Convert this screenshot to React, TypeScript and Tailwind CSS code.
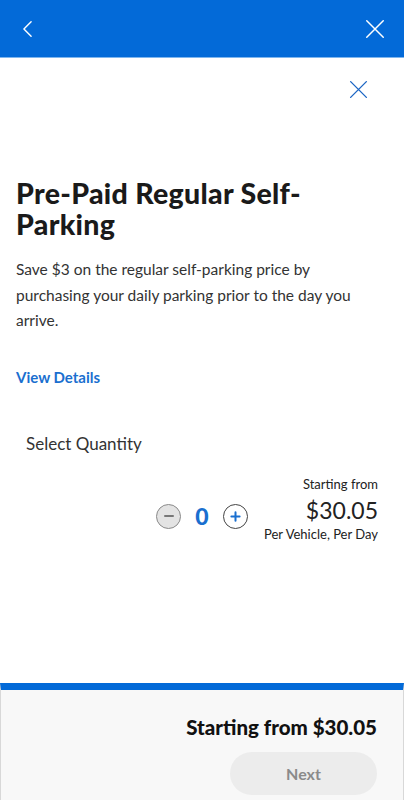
import React, { useState } from 'react';

const Cross = ({ className }: { className?: string }) => (
  <svg viewBox="0 0 24 24" className={className} fill="none" stroke="currentColor" strokeWidth={1.6} strokeLinecap="round">
    <path d="M3 3 L21 21 M21 3 L3 21" />
  </svg>
);

export default function App() {
  const [qty, setQty] = useState(0);

  return (
    <div className="h-[800px] w-full flex flex-col bg-white overflow-hidden" style={{ fontFamily: 'Lato, "Noto Sans", sans-serif' }}>
      {/* Top bar */}
      <div className="h-[58px] bg-[#036ad8] border-b border-[#7fb6ee] flex items-center justify-between pl-[22px] pr-[18px] shrink-0">
        <svg viewBox="0 0 12 20" className="w-[11px] h-[18px] text-white" fill="none" stroke="currentColor" strokeWidth={1.6} strokeLinecap="round" strokeLinejoin="round">
          <path d="M10 2 L2 10 L10 18" />
        </svg>
        <Cross className="w-[22px] h-[22px] text-white" />
      </div>

      <div className="flex-1 flex flex-col">
        <div className="flex justify-end pr-[35px] pt-[21px]">
          <Cross className="w-[21px] h-[21px] text-[#1c66c4]" />
        </div>

        <h1 className="mt-[78px] px-4 text-[28.5px] leading-[31px] font-black text-[#1a1a1a] tracking-[0.3px]">
          Pre-Paid Regular Self-<br />Parking
        </h1>
        <p className="mt-[17px] px-4 pr-6 text-[15.5px] leading-[25.5px] text-[#333]">
          Save $3 on the regular self-parking price by purchasing your daily parking prior to the day you arrive.
        </p>
        <a className="mt-[32px] px-4 text-[15px] font-bold text-[#1a6fcf]">View Details</a>

        <div className="mt-[43px] pl-[26px] text-[17px] text-[#333]">Select Quantity</div>

        <div className="mt-[18px] pr-[26px] flex items-end justify-end gap-[16px]">
          <div className="flex items-center gap-[14px] pb-[14px]">
            <button
              onClick={() => setQty(Math.max(0, qty - 1))}
              className="w-[25px] h-[25px] rounded-full border border-[#8a8a8a] bg-[#e3e3e3] flex items-center justify-center"
            >
              <span className="block w-[10px] h-[2px] bg-[#777] rounded" />
            </button>
            <span className="text-[23px] font-black text-[#1a6fcf] w-[14px] text-center leading-none">{qty}</span>
            <button
              onClick={() => setQty(qty + 1)}
              className="w-[25px] h-[25px] rounded-full border border-[#444] bg-white flex items-center justify-center text-[#1a6fcf]"
            >
              <svg viewBox="0 0 12 12" className="w-[11px] h-[11px]" fill="none" stroke="currentColor" strokeWidth={2.2} strokeLinecap="round">
                <path d="M6 1.5 V10.5 M1.5 6 H10.5" />
              </svg>
            </button>
          </div>
          <div className="flex flex-col items-end text-[#222]">
            <span className="text-[13px] leading-[18px]">Starting from</span>
            <span className="text-[23px] leading-[30px] mt-[2px]">$30.05</span>
            <span className="text-[13px] leading-[18px]">Per Vehicle, Per Day</span>
          </div>
        </div>
      </div>

      {/* Footer */}
      <div className="h-[117px] shrink-0 border-t-[7px] border-[#036ad8] bg-[#f8f8f8] border-x border-x-[#d8d8d8] flex flex-col items-end pr-[26px]">
        <div className="mt-[24px] text-[20.5px] font-black text-[#111] leading-[26px]">Starting from $30.05</div>
        <button className="mt-[12px] w-[147px] h-[43px] rounded-full bg-[#ececec] text-[16px] font-bold text-[#8a8a8a]">Next</button>
      </div>
    </div>
  );
}
